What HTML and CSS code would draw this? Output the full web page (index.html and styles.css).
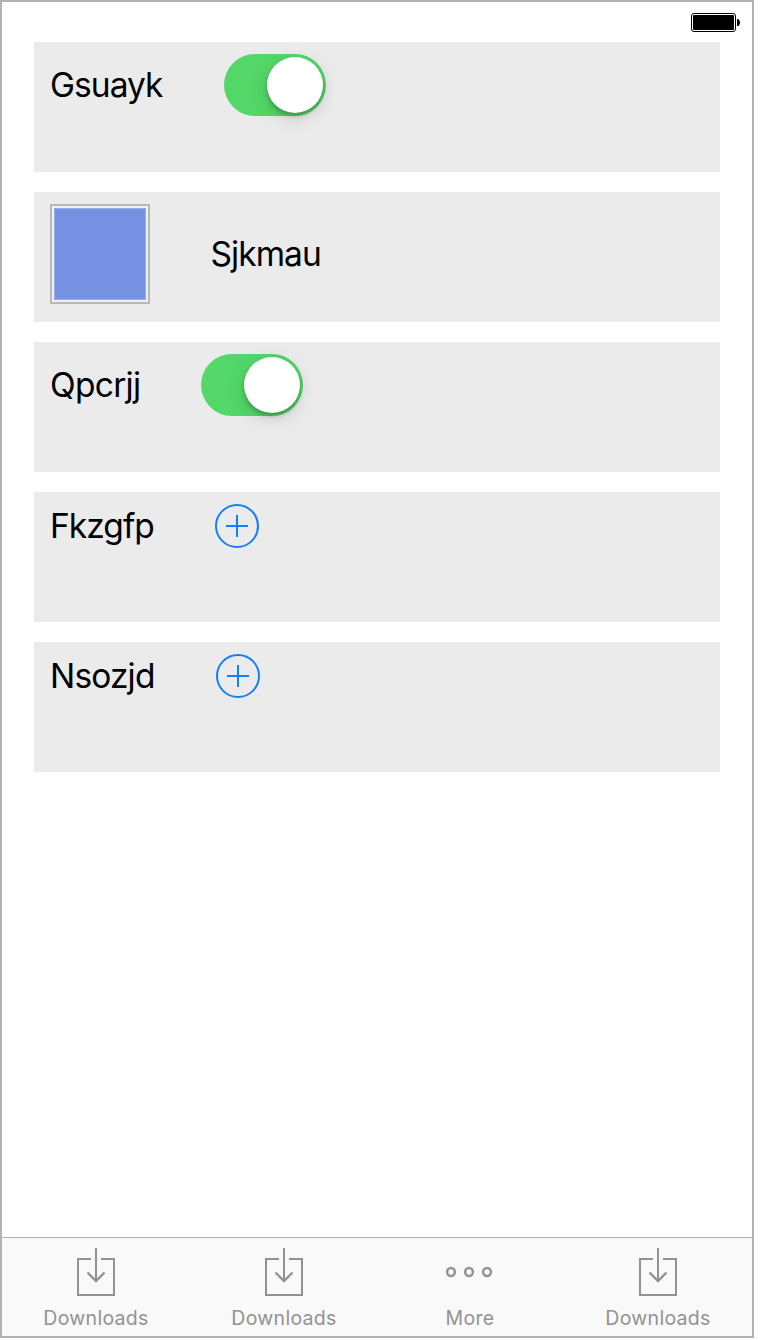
FILE: index.html
```html
<!DOCTYPE html>
<html lang="en">
<head>
<meta charset="utf-8">
<title>Settings</title>
<link rel="stylesheet" href="styles.css">
</head>
<body>
<div class="screen">
  <header class="status">
    <svg class="battery" width="50" height="20" viewBox="0 0 50 20">
      <rect x="0.5" y="0.5" width="44" height="18" rx="2.5" fill="#fff" stroke="#000"/>
      <rect x="2" y="2" width="41" height="15" rx="1" fill="#000"/>
      <path d="M46 6h1.2q1.8 1 1.8 3.5t-1.8 3.5H46z" fill="#000"/>
    </svg>
  </header>
  <main class="list">
    <section class="row">
      <span class="label label-gsuayk">Gsuayk</span>
      <span class="switch"><span class="thumb"></span></span>
    </section>
    <section class="row">
      <span class="swatch"></span>
      <span class="label label-sjkmau">Sjkmau</span>
    </section>
    <section class="row">
      <span class="label label-qpcrjj">Qpcrjj</span>
      <span class="switch"><span class="thumb"></span></span>
    </section>
    <section class="row">
      <span class="label label-fkzgfp">Fkzgfp</span>
      <svg class="add" width="44" height="44" viewBox="0 0 44 44"><circle cx="22" cy="22" r="21"/><path d="M22 11v22M11 22h22"/></svg>
    </section>
    <section class="row">
      <span class="label label-nsozjd">Nsozjd</span>
      <svg class="add" width="44" height="44" viewBox="0 0 44 44"><circle cx="22" cy="22" r="21"/><path d="M22 11v22M11 22h22"/></svg>
    </section>
  </main>
  <nav class="tabs">
    <div class="tab">
      <svg class="icon" width="38" height="48" viewBox="0 0 38 48"><path d="M14 11H1v36h36V11H24M19 0v33"/><path class="arrow" d="M10.500 24.500l8.500 8.500 8.500-8.500"/></svg>
      <span class="tab-label">Downloads</span>
    </div>
    <div class="tab">
      <svg class="icon" width="38" height="48" viewBox="0 0 38 48"><path d="M14 11H1v36h36V11H24M19 0v33"/><path class="arrow" d="M10.500 24.500l8.500 8.500 8.500-8.500"/></svg>
      <span class="tab-label">Downloads</span>
    </div>
    <div class="tab tab-more">
      <svg class="icon dots" width="48" height="48" viewBox="0 0 48 48"><circle cx="5" cy="24" r="3.9"/><circle cx="23" cy="24" r="3.9"/><circle cx="41" cy="24" r="3.9"/></svg>
      <span class="tab-label">More</span>
    </div>
    <div class="tab">
      <svg class="icon" width="38" height="48" viewBox="0 0 38 48"><path d="M14 11H1v36h36V11H24M19 0v33"/><path class="arrow" d="M10.500 24.500l8.500 8.500 8.500-8.500"/></svg>
      <span class="tab-label">Downloads</span>
    </div>
  </nav>
</div>
</body>
</html>
```
FILE: styles.css
```css
body {
  margin: 0;
  background: #fff;
  font-family: Inter, "Liberation Sans", sans-serif;
}
.screen {
  box-sizing: border-box;
  width: 754px;
  height: 1338px;
  border: 2px solid #b3b3b3;
  display: flex;
  flex-direction: column;
}
.status {
  box-sizing: border-box;
  height: 40px;
  padding: 11px 11px 0 0;
  display: flex;
  justify-content: flex-end;
}
.battery { display: block; }
.list {
  flex: 1;
  padding: 0 32px;
  display: flex;
  flex-direction: column;
  gap: 20px;
}
.row {
  box-sizing: border-box;
  height: 130px;
  padding: 12px 16px;
  background: #ebebeb;
  display: flex;
  align-items: flex-start;
}
.label {
  box-sizing: border-box;
  font-size: 33.5px;
  line-height: 45px;
  color: #000;
  white-space: nowrap;
  flex: none;
}
.label-gsuayk { width: 174px; line-height: 62px; letter-spacing: -0.95px; }
.label-sjkmau { padding-left: 0.5px; line-height: 101px; letter-spacing: -0.95px; }
.label-qpcrjj { width: 151px; line-height: 63px; letter-spacing: -0.7px; }
.label-fkzgfp { width: 165px; letter-spacing: -0.95px; }
.label-nsozjd { width: 166px; letter-spacing: -0.85px; }
.switch {
  box-sizing: border-box;
  width: 102px;
  height: 62px;
  padding: 3px;
  border-radius: 31px;
  background: #53d769;
  display: flex;
  justify-content: flex-end;
}
.thumb {
  width: 56px;
  height: 56px;
  border-radius: 50%;
  background: #fff;
  box-shadow: 0 5px 18px rgba(0, 0, 0, 0.15), 0 3px 4px rgba(0, 0, 0, 0.22);
}
.swatch {
  box-sizing: border-box;
  width: 100px;
  height: 100px;
  margin-right: 60px;
  padding: 2px;
  border: 2px solid #b8b8b8;
  background: #7690e2 content-box;
  box-shadow: inset 0 0 0 2px #f0f1f6, inset 0 0 0 3px #9aace8;
}
.add {
  display: block;
  fill: none;
  stroke: #147efb;
  stroke-width: 2;
}
.tabs {
  height: 98px;
  border-top: 1px solid #b2b2b2;
  background: #f9f9f9;
  display: grid;
  grid-template-columns: 188px 188px 186px 188px;
}
.tab {
  padding-top: 10px;
  display: flex;
  flex-direction: column;
  align-items: center;
}
.tab-more { padding-right: 2px; }
.icon {
  display: block;
  fill: none;
  stroke: #929292;
  stroke-width: 2;
}
.arrow { stroke-width: 2.4; }
.dots { stroke-width: 2.5; }
.tab-label {
  margin-top: 10px;
  font-size: 19.5px;
  line-height: 24px;
  letter-spacing: 0.3px;
  color: #929292;
}
```
